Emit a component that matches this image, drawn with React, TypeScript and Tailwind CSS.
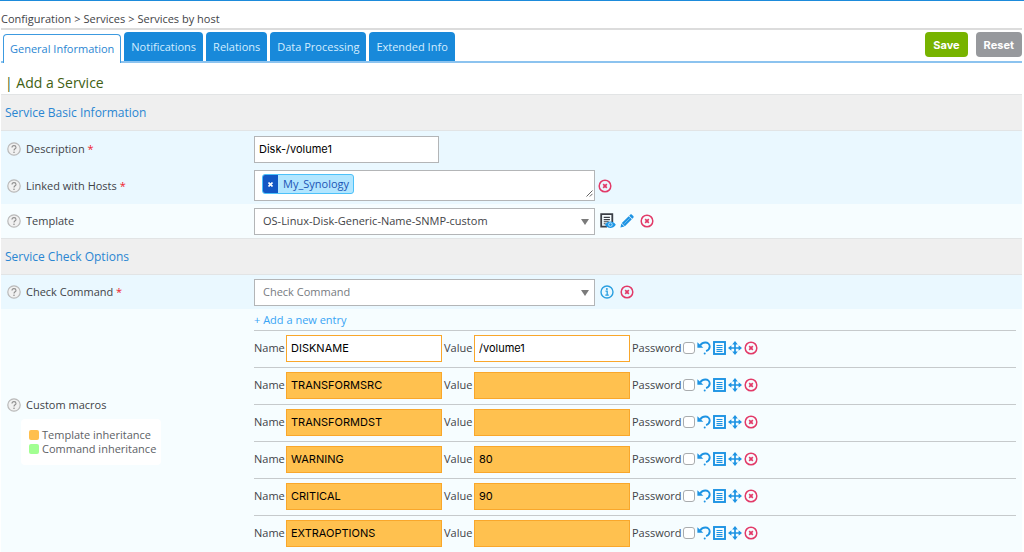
import { useState } from 'react';
import type { ReactNode } from 'react';

const TABS = ['General Information', 'Notifications', 'Relations', 'Data Processing', 'Extended Info'];

const MACROS = [
  { name: 'DISKNAME', value: '/volume1', inherited: false },
  { name: 'TRANSFORMSRC', value: '', inherited: true },
  { name: 'TRANSFORMDST', value: '', inherited: true },
  { name: 'WARNING', value: '80', inherited: true },
  { name: 'CRITICAL', value: '90', inherited: true },
  { name: 'EXTRAOPTIONS', value: '', inherited: true },
];

function HelpIcon() {
  return (
    <svg width="14" height="14" viewBox="0 0 14 14" fill="none" className="shrink-0">
      <circle cx="7" cy="7" r="6.2" fill="#f1f1f1" stroke="#b9b9b9" strokeWidth="1.2" />
      <path
        d="M5 5.6C5 4.3 5.9 3.6 7 3.6s2 .7 2 1.8c0 1.3-2 1.5-2 3"
        stroke="#8f8f8f"
        strokeWidth="1.1"
      />
      <circle cx="7" cy="10.2" r=".8" fill="#8f8f8f" />
    </svg>
  );
}

function DeleteIcon() {
  return (
    <svg width="14" height="14" viewBox="0 0 14 14" fill="none" stroke="#e23a68">
      <circle cx="7" cy="7" r="5.8" strokeWidth="1.5" />
      <path d="M5.2 5.2l3.6 3.6M8.8 5.2L5.2 8.8" strokeWidth="1.7" />
    </svg>
  );
}

function InfoIcon() {
  return (
    <svg width="14" height="14" viewBox="0 0 14 14" fill="none" stroke="#2a9fe0">
      <circle cx="7" cy="7" r="6" strokeWidth="1.4" />
      <path d="M5.5 6.2h1.7v3.8M5.3 10.1h3.5" strokeWidth="1.3" />
      <circle cx="6.9" cy="3.9" r="1" fill="#2a9fe0" stroke="none" />
    </svg>
  );
}

function ViewIcon() {
  return (
    <svg width="16" height="16" viewBox="0 0 16 16" fill="none">
      <path d="M12.3 9V1.2H1.2v12.4H7" stroke="#3b3f46" strokeWidth="1.8" />
      <path d="M3.7 4.4h6.2M3.7 6.6h6.2M3.7 8.8h5M3.7 10.8h2" stroke="#3b3f46" strokeWidth="1.1" />
      <path d="M5 11.8c1.5-2.3 3.4-3.3 5.4-3.3s3.900 1 5.400 3.300c-1.500 2.300-3.400 3.300-5.400 3.300s-3.900-1-5.400-3.300z" fill="#1d97e6" />
      <circle cx="10.400" cy="11.600" r="1.800" stroke="#d8effd" strokeWidth=".8" />
    </svg>
  );
}

function PencilIcon() {
  return (
    <svg width="14" height="14" viewBox="0 0 14 14" fill="#1d93e3">
      <path d="M.4 13.6l1-4 3 3zM1.800 9.100l6.900-6.900 3.100 3.100-6.900 6.900zM9.200 1.700l1-1c.5-.5 1.200-.5 1.700 0l1.400 1.400c.5.500.5 1.200 0 1.700l-1 1z" />
      <path d="M4.300 9.700L9.600 4.400" stroke="#8ccdf5" strokeWidth=".7" />
    </svg>
  );
}

function UndoIcon() {
  return (
    <svg width="14" height="14" viewBox="0 0 14 14" fill="none">
      <path d="M3.200 4.400C4.600 2.400 6.400 1.500 8.300 1.500c2.500 0 4.400 1.800 4.400 4.100 0 2.200-1.400 3.700-3.600 4.500" stroke="#1d93e3" strokeWidth="1.900" />
      <path d="M.4 1.200v5.600h5.900z" fill="#1d93e3" />
      <circle cx="7.700" cy="12.400" r="1" fill="#1d93e3" />
    </svg>
  );
}

function ListIcon() {
  return (
    <svg width="13" height="14" viewBox="0 0 13 14" fill="none" stroke="#1d93e3">
      <rect x="1" y="1" width="11" height="12" strokeWidth="1.900" />
      <path d="M3.500 4.500h6M3.500 6.500h6M3.500 8.500h6M3.500 10.400h6" strokeWidth="1.100" />
    </svg>
  );
}

function MoveIcon() {
  return (
    <svg width="14" height="14" viewBox="0 0 14 14">
      <path d="M7 2v10M2 7h10" stroke="#1d93e3" strokeWidth="1.700" />
      <path
        d="M7 0l2.800 3.400H4.200zM7 14l2.800-3.400H4.200zM0 7l3.400-2.800v5.600zM14 7l-3.400-2.800v5.600z"
        fill="#1d93e3"
      />
    </svg>
  );
}

function IconButton({ label, children }: { label: string; children: ReactNode }) {
  return (
    <button type="button" aria-label={label} className="shrink-0 cursor-pointer">
      {children}
    </button>
  );
}

function SectionTitle({ children }: { children: ReactNode }) {
  return (
    <h2 className="border-y border-[#e2e4e5] bg-[#efefef] px-1 py-2 text-xs leading-[19px] text-[#2a86d2]">
      {children}
    </h2>
  );
}

function Required() {
  return <span className="text-[#f0202c]"> *</span>;
}

function FieldLabel({ id, children }: { id: string; children: ReactNode }) {
  return (
    <div className="flex w-[253px] shrink-0 items-center gap-[5px] pl-[6px]">
      <HelpIcon />
      <label htmlFor={id}>{children}</label>
    </div>
  );
}

function Select({ id, options, className }: { id: string; options: string[]; className: string }) {
  return (
    <div className="relative w-[341px]">
      <select
        id={id}
        className={`block h-[27px] w-full appearance-none border border-[#b3b5b7] bg-white pr-6 pl-2 ${className}`}
      >
        {options.map((option) => (
          <option key={option}>{option}</option>
        ))}
      </select>
      <svg width="8" height="6" viewBox="0 0 8 6" className="pointer-events-none absolute top-[11px] right-[6px]">
        <path d="M0 0h8L4 6z" fill="#7b7b7b" />
      </svg>
    </div>
  );
}

function MacroRow({ macro, index }: { macro: (typeof MACROS)[number]; index: number }) {
  const input = `h-[27px] w-[156px] border border-[#f9a72b] px-1 font-['Inter',sans-serif] text-[11px] text-black ${
    macro.inherited ? 'bg-[#ffc14f]' : 'bg-white'
  }`;

  return (
    <li className="flex h-[37px] items-center border-t border-[#c6cacc] pb-[2px]">
      <label htmlFor={`name-${index}`} className="w-8">
        Name
      </label>
      <input id={`name-${index}`} defaultValue={macro.name} className={input} />
      <label htmlFor={`value-${index}`} className="w-8 pl-[2px]">
        Value
      </label>
      <input id={`value-${index}`} defaultValue={macro.value} className={input} />
      <label htmlFor={`password-${index}`} className="w-[53px] pl-[2px]">
        Password
      </label>
      <input
        id={`password-${index}`}
        type="checkbox"
        className="size-3 appearance-none rounded-[3px] border border-[#a9acae] bg-white checked:bg-[#1d93e3]"
      />
      <div className="flex items-center gap-[2px] pl-[2px]">
        <IconButton label="Undo">
          <UndoIcon />
        </IconButton>
        <IconButton label="Description">
          <ListIcon />
        </IconButton>
        <IconButton label="Move">
          <MoveIcon />
        </IconButton>
        <IconButton label="Delete">
          <DeleteIcon />
        </IconButton>
      </div>
    </li>
  );
}

export default function App() {
  const [active, setActive] = useState('General Information');

  return (
    <main className="min-h-screen border-t border-[#1d8bdb] bg-white pr-[2px] pl-px font-['Open_Sans',sans-serif] text-[11px] leading-4 text-[#3f4347] [&_button>svg]:block">
      <nav className="flex gap-[3px] border-b-2 border-[#dcdcdc] pt-[10px] pb-px">
        <a href="#configuration">Configuration</a>
        <span>&gt;</span>
        <a href="#services">Services</a>
        <span>&gt;</span>
        <a href="#by-host">Services by host</a>
      </nav>

      <form onSubmit={(e) => e.preventDefault()}>
        <div className="flex items-end justify-between border-b-2 border-[#8cc3ef] pt-[2px]">
          <div className="flex items-end gap-[3px] pl-[2px]">
            {TABS.map((tab) => (
              <button
                key={tab}
                type="button"
                onClick={() => setActive(tab)}
                className={
                  active === tab
                    ? '-mb-[2px] h-[29px] cursor-pointer rounded-t border border-b-0 border-[#3c9ae0] bg-white px-[6px] text-[#2a86d2]'
                    : 'h-[29px] cursor-pointer rounded-t bg-[#1889da] px-[7px] text-[#d3edff]'
                }
              >
                {tab}
              </button>
            ))}
          </div>
          <div className="flex gap-2 pb-1 font-['Inter',sans-serif] font-bold text-white">
            <button type="submit" className="h-[25px] cursor-pointer rounded bg-[#77b300] px-2">
              Save
            </button>
            <button type="reset" className="h-[25px] cursor-pointer rounded bg-[#97999d] px-2">
              Reset
            </button>
          </div>
        </div>

        <h1 className="px-1 pt-[11px] pb-[2px] text-sm leading-[18px] text-[#416013]">| Add a Service</h1>

        <SectionTitle>Service Basic Information</SectionTitle>
        <div className="flex h-9 items-center bg-[#eaf8ff]">
          <FieldLabel id="description">
            Description
            <Required />
          </FieldLabel>
          <input
            id="description"
            defaultValue="Disk-/volume1"
            className="h-[27px] w-[185px] border border-[#b3b5b7] bg-white px-1 font-['Inter',sans-serif] text-black"
          />
        </div>
        <div className="flex h-[37px] items-center bg-[#eaf8ff]">
          <FieldLabel id="hosts">
            Linked with Hosts
            <Required />
          </FieldLabel>
          <div className="relative flex h-[31px] w-[341px] items-start border border-[#b3b5b7] bg-white py-[3px] pl-[7px]">
            <span className="flex h-5 items-center overflow-hidden rounded-[3px] border border-[#4cc1f9] bg-[#b2e6ff] pr-1 text-[#1c55b5]">
              <button
                type="button"
                aria-label="Remove My_Synology"
                className="mr-[5px] flex h-full w-[15px] cursor-pointer items-center justify-center bg-[#1257c4]"
              >
                <svg width="5" height="5" viewBox="0 0 5 5" stroke="#fff" strokeWidth="1.6">
                  <path d="M.5.5l4 4M4.5.5l-4 4" />
                </svg>
              </button>
              My_Synology
            </span>
            <input id="hosts" className="min-w-0 flex-1 outline-none" />
            <svg width="7" height="7" viewBox="0 0 7 7" stroke="#666" className="absolute right-px bottom-[3px]">
              <path d="M.5 6.5l6-6M3.8 6.5l2.7-2.7" />
            </svg>
          </div>
          <div className="flex pl-[3px]">
            <IconButton label="Clear hosts">
              <DeleteIcon />
            </IconButton>
          </div>
        </div>
        <div className="flex h-[34px] items-center bg-[#f6fdff]">
          <FieldLabel id="template">Template</FieldLabel>
          <Select id="template" options={['OS-Linux-Disk-Generic-Name-SNMP-custom']} className="text-[#3f4347]" />
          <div className="flex items-center gap-1 pl-[5px]">
            <IconButton label="View template">
              <ViewIcon />
            </IconButton>
            <IconButton label="Edit template">
              <PencilIcon />
            </IconButton>
            <span className="flex pl-[2px]">
              <IconButton label="Clear template">
                <DeleteIcon />
              </IconButton>
            </span>
          </div>
        </div>

        <SectionTitle>Service Check Options</SectionTitle>
        <div className="flex h-[34px] items-center bg-[#eaf8ff]">
          <FieldLabel id="command">
            Check Command
            <Required />
          </FieldLabel>
          <Select id="command" options={['Check Command']} className="text-[#777b7f]" />
          <div className="flex items-center gap-[6px] pl-[5px]">
            <IconButton label="Command information">
              <InfoIcon />
            </IconButton>
            <IconButton label="Clear command">
              <DeleteIcon />
            </IconButton>
          </div>
        </div>
        <div className="flex items-center bg-[#f6fdff]">
          <div className="w-[253px] shrink-0">
            <div className="flex items-center gap-[5px] pl-[6px]">
              <HelpIcon />
              <span>Custom macros</span>
            </div>
            <div className="mt-[6px] ml-5 w-fit rounded bg-white py-[9px] pr-[5px] pl-2 leading-[14px] text-[#5d6165]">
              <div className="flex items-center gap-[3px]">
                <span className="size-[10px] rounded-[2px] bg-[#ffbf4d]" />
                Template inheritance
              </div>
              <div className="flex items-center gap-[3px]">
                <span className="size-[10px] rounded-[2px] bg-[#a2ff92]" />
                Command inheritance
              </div>
            </div>
          </div>
          <div className="flex-1 pr-[6px]">
            <button type="button" className="block cursor-pointer pt-[3px] pb-[2px] text-[#38a4f5]">
              + Add a new entry
            </button>
            <ul>
              {MACROS.map((macro, i) => (
                <MacroRow key={macro.name} macro={macro} index={i} />
              ))}
            </ul>
          </div>
        </div>
      </form>
    </main>
  );
}
